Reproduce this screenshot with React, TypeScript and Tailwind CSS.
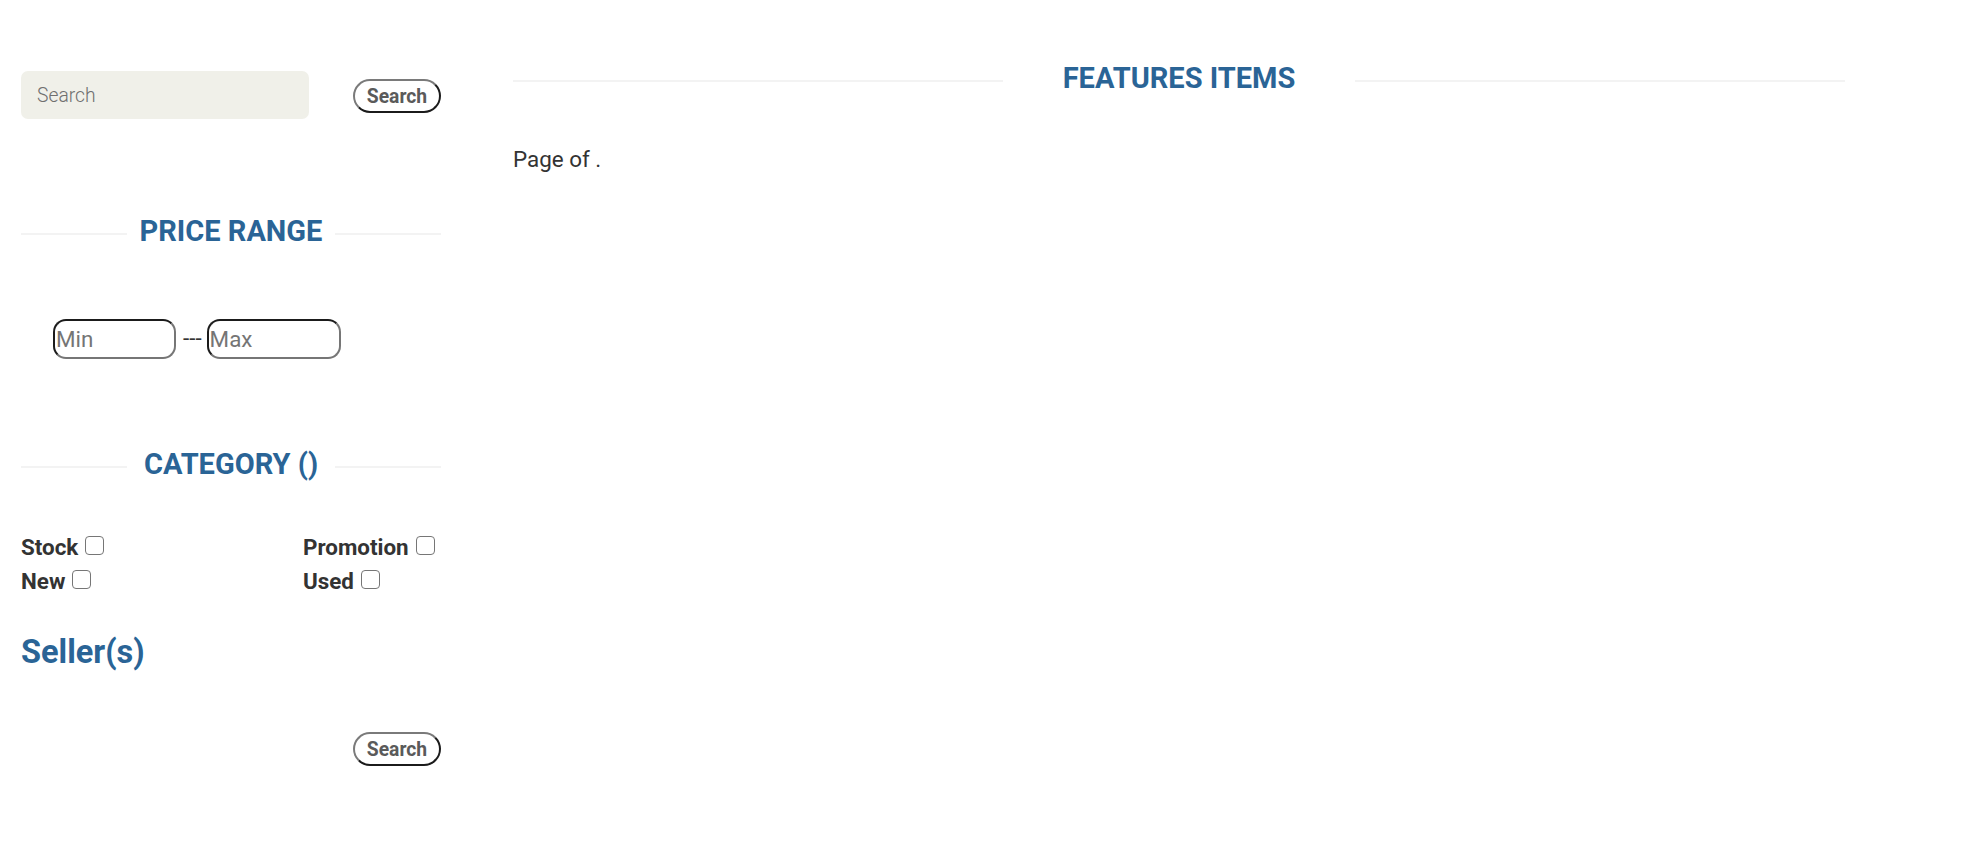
import React from 'react';

const Title = ({ text, width }: { text: string; width: string }) => (
  <div className="flex items-center">
    <div className="flex-1 h-[2px] mt-[4px] bg-[#f3f3f3]"></div>
    <h2 className={`${width} text-center text-[29px] leading-[33px] font-bold uppercase text-[#2a6496]`}>{text}</h2>
    <div className="flex-1 h-[2px] mt-[4px] bg-[#f3f3f3]"></div>
  </div>
);

const SearchButton = () => (
  <button
    type="button"
    className="h-[34px] w-[88px] pt-[2px] rounded-full bg-white border-2 border-t-[#7a7a7a] border-l-[#7a7a7a] border-b-[#1b1b1b] border-r-[#1b1b1b] text-[19.3px] leading-[26px] font-bold text-[#5a5a5a]"
  >
    Search
  </button>
);

const Check = ({ label }: { label: string }) => (
  <label className="block">
    {label}
    <input
      type="checkbox"
      className="appearance-none inline-block align-baseline ml-[7px] w-[19px] h-[19px] border-[1.5px] border-[#767676] rounded-[4px] bg-white"
    />
  </label>
);

export default function App() {
  const categories = ['Stock', 'Promotion', 'New', 'Used'];

  return (
    <div className="min-h-screen bg-white font-['Roboto','Liberation_Sans',sans-serif] text-[#333] flex pl-[21px]">
      {/* Sidebar */}
      <aside className="w-[420px] pt-[71px]">
        <div className="flex items-center justify-between">
          <input
            type="text"
            placeholder="Search"
            className="w-[288px] h-[48px] rounded-[7px] bg-[#f0f0e9] pl-[16px] text-[19.3px] font-light outline-none placeholder:text-[#6f6f6f]"
          />
          <div className="pt-[2px]">
            <SearchButton />
          </div>
        </div>

        <div className="mt-[96px]">
          <Title text="Price Range" width="w-[208px]" />
        </div>

        <div className="mt-[71px] pl-[32px] flex items-center text-[22.4px]">
          <input
            type="text"
            placeholder="Min"
            className="w-[123px] h-[40px] rounded-[13px] border-2 border-t-[#1b1b1b] border-l-[#1b1b1b] border-b-[#767676] border-r-[#767676] px-[1px] outline-none placeholder:text-[#757575]"
          />
          <span className="ml-[7px] mr-[5px]">---</span>
          <input
            type="text"
            placeholder="Max"
            className="w-[134px] h-[40px] rounded-[13px] border-2 border-t-[#1b1b1b] border-l-[#1b1b1b] border-b-[#767676] border-r-[#767676] px-[1px] outline-none placeholder:text-[#757575]"
          />
        </div>

        <div className="mt-[89px]">
          <Title text="Category ()" width="w-[208px]" />
        </div>

        <div className="mt-[49px] grid grid-cols-[282px_1fr] text-[22.4px] leading-[34px] font-bold text-[#333]">
          {categories.map((c) => (
            <Check key={c} label={c} />
          ))}
        </div>

        <h3 className="mt-[35px] text-[32.5px] leading-[38px] font-bold text-[#2a6496]">Seller(s)</h3>

        <div className="mt-[61px] flex justify-end">
          <SearchButton />
        </div>
      </aside>

      {/* Main */}
      <main className="ml-[72px] w-[1332px] pt-[62px]">
        <Title text="Features Items" width="w-[352px]" />
        <p className="mt-[48px] text-[22.4px] leading-[32px] text-[#333]">Page of .</p>
      </main>
    </div>
  );
}
